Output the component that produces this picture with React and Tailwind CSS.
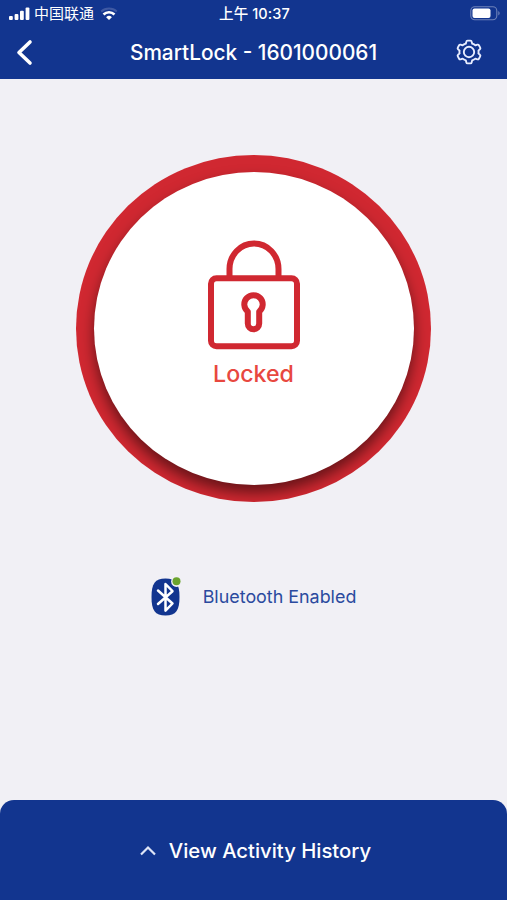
function SignalBars() {
  return (
    <svg className="block h-[14px] w-[22px]" viewBox="0 0 22 14" fill="#fff">
      <rect x="1" y="9" width="3.8" height="4" rx="1" />
      <rect x="6.6" y="7" width="3.8" height="6" rx="1" />
      <rect x="12" y="3.8" width="3.8" height="9.2" rx="1" />
      <rect x="17.6" y="0.5" width="3.8" height="12.5" rx="1" />
    </svg>
  );
}

function WifiIcon() {
  return (
    <svg className="block h-[14px] w-[18px]" viewBox="0 0 18 14" fill="none">
      <path d="M1.2 4.6a11.6 11.6 0 0 1 15.6 0" stroke="#3f59a3" strokeWidth="2" />
      <path d="M3.5 7.5a8 8 0 0 1 11 0" stroke="#fff" strokeWidth="2.6" />
      <path d="M9 13l-2.9-2.8a4.2 4.2 0 0 1 5.8 0z" fill="#fff" />
    </svg>
  );
}

function BatteryIcon() {
  return (
    <svg className="block h-[15px] w-[31px]" viewBox="0 0 31 15" fill="none">
      <rect x="0.8" y="0.8" width="26" height="13" rx="4" stroke="#6f83ba" strokeWidth="1.1" />
      <rect x="2.5" y="2.5" width="18" height="9.5" rx="2" fill="#fff" />
      <path d="M28.3 5v4.6a2.6 2.6 0 0 0 0-4.6z" fill="#6f83ba" />
    </svg>
  );
}

function BackIcon() {
  return (
    <svg className="block h-[28px] w-[18px]" viewBox="0 0 18 28" fill="none" stroke="#fff" strokeWidth="3.6" strokeLinecap="round" strokeLinejoin="round">
      <path d="M15 4L4 14.5 15 25" />
    </svg>
  );
}

function GearIcon() {
  return (
    <svg className="block h-[26px] w-[26px]" viewBox="0 0 26 26" fill="none" stroke="#e8edff" strokeWidth="1.9" strokeLinejoin="round">
      <path d="M11.6 1.6h2.8q1.1 0 1.3 1.1l.5 2q2.1.7 3.2 1.7l2-.7q1-.3 1.5.6l1.3 2.3q.5.9-.3 1.6l-1.5 1.4q.4 1.4 0 2.8l1.5 1.4q.8.7.3 1.6l-1.3 2.3q-.5.9-1.5.6l-2-.7q-1.1 1-3.2 1.7l-.5 2q-.2 1.1-1.3 1.1h-2.8q-1.1 0-1.3-1.1l-.5-2q-2.1-.7-3.2-1.7l-2 .7q-1 .3-1.5-.6l-1.3-2.3q-.5-.9.3-1.6l1.5-1.4q-.4-1.4 0-2.8l-1.5-1.4q-.8-.7-.3-1.6l1.3-2.3q.5-.9 1.5-.6l2 .7q1.1-1 3.2-1.7l.5-2q.2-1.1 1.3-1.1z" />
      <circle cx="13" cy="13" r="5.2" />
    </svg>
  );
}

function LockIcon() {
  return (
    <svg className="block h-[110px] w-[92px]" viewBox="0 0 92 110" fill="none" stroke="#d02831" strokeWidth="6">
      <path d="M21.5 38V29a24.5 25.5 0 0 1 49 0v9" />
      <rect x="3" y="38.3" width="86" height="68" rx="5.5" />
      <path d="M39.8 71.6a9.2 9.2 0 1 1 11.4 0v12a5.7 5.7 0 0 1-11.4 0z" strokeLinejoin="round" />
    </svg>
  );
}

function BluetoothIcon() {
  return (
    <svg className="block h-[40px] w-[32px]" viewBox="0 0 32 40" fill="none">
      <path d="M14.5 1.5c10.5 0 14 5 14 18.5s-3.5 18.5-14 18.5S.5 33.500.5 20 4 1.500 14.500 1.500z" fill="#12358f" />
      <path d="M7 13.5l14.5 13-7 7.200V7l7 7.200L7 27" stroke="#fff" strokeWidth="2.5" strokeLinejoin="round" strokeLinecap="round" />
      <circle cx="25.5" cy="4.500" r="5.4" fill="#f1f0f5" />
      <circle cx="25.5" cy="4.3" r="4" fill="#6ba32d" />
    </svg>
  );
}

function StatusBar() {
  return (
    <div className="grid h-[27px] grid-cols-3 items-center pl-2 pr-[6px]">
      <div className="flex items-center">
        <SignalBars />
        <span className="ml-[4px] text-[15px] leading-[20px]">中国联通</span>
        <div className="ml-[6px]">
          <WifiIcon />
        </div>
      </div>
      <span className="text-center text-[14.5px] font-medium leading-[20px] tracking-[0.1px] whitespace-nowrap">上午 10:37</span>
      <div className="flex justify-end">
        <BatteryIcon />
      </div>
    </div>
  );
}

export default function App() {
  return (
    <div className="flex h-[900px] w-[507px] flex-col overflow-hidden bg-[#f1f0f5] font-['Inter','Noto_Sans_CJK_SC',sans-serif]">
      <header className="h-[79px] bg-[#12358f] text-white">
        <StatusBar />
        <div className="grid h-[50px] grid-cols-[1fr_auto_1fr] items-center pl-[15px] pr-[15px]">
          <button className="w-[26px]">
            <BackIcon />
          </button>
          <h1 className="mt-px text-[20.8px] font-medium whitespace-nowrap">SmartLock - 1601000061</h1>
          <button className="mr-[10px] justify-self-end">
            <GearIcon />
          </button>
        </div>
      </header>

      <main className="flex flex-1 flex-col items-center pt-[76px]">
        <div className="flex h-[347px] w-[355px] items-center justify-center overflow-hidden rounded-[50%] bg-[#d02831]">
          <div className="flex h-[313px] w-[320px] flex-col items-center rounded-[50%] bg-white pt-[68px] shadow-[0_8px_14px_rgba(0,0,0,0.5)]">
            <LockIcon />
            <span className="mt-[8px] text-[23.2px] font-medium leading-[32px] text-[#e8483f]">Locked</span>
          </div>
        </div>

        <div className="mt-[75px] flex items-center">
          <BluetoothIcon />
          <span className="ml-[20px] text-[17.9px] text-[#2b4a9e] whitespace-nowrap">Bluetooth Enabled</span>
        </div>
      </main>

      <footer className="flex h-[100px] items-center justify-center rounded-t-[14px] bg-[#12358f] pl-[3px] pt-[2px] text-white">
        <svg className="mr-[12px] block h-[12px] w-[18px]" viewBox="0 0 18 12" fill="none" stroke="#dfe5f7" strokeWidth="2.2">
          <path d="M2 9.5l7-7 7 7" />
        </svg>
        <span className="text-[20.3px] font-medium whitespace-nowrap">View Activity History</span>
      </footer>
    </div>
  );
}
